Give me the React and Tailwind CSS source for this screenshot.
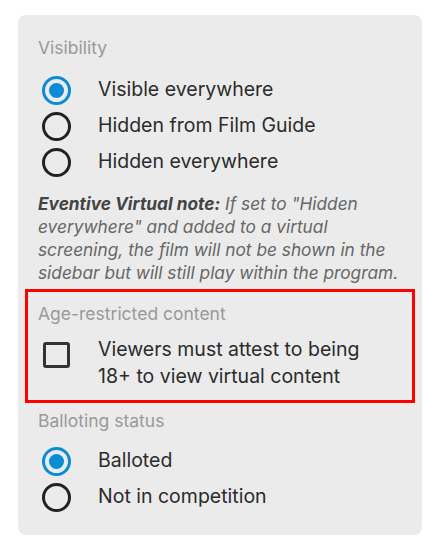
import React, { useState } from "react";

function Radio({ checked, label, onClick }) {
    return (
        <div className="flex items-center h-9 cursor-pointer" onClick={onClick}>
            <div className="w-9 flex justify-center">
                {checked ? (
                    <span className="w-[29px] h-[29px] rounded-full border-[3px] border-[#0a8bd6] flex items-center justify-center">
                        <span className="w-[15px] h-[15px] rounded-full bg-[#0a8bd6]"></span>
                    </span>
                ) : (
                    <span className="w-[29px] h-[29px] rounded-full border-[3px] border-[#222]"></span>
                )}
            </div>
            <span className="ml-[24px] text-[19.5px] text-[#2b2b2b]">{label}</span>
        </div>
    );
}

export default function App() {
    const [visibility, setVisibility] = useState("visible");
    const [ballot, setBallot] = useState("balloted");
    const [adult, setAdult] = useState(false);

    return (
        <div className="w-[440px] h-[554px] bg-white pt-[15px] px-[18px]" style={{ fontFamily: "Inter, 'Noto Sans', sans-serif" }}>
            <div className="w-[404px] h-[520px] rounded-lg bg-[#ebebeb] pt-[24px] pb-4">
                <div className="px-5">
                    <div className="text-[17.5px] text-[#999] leading-[18px]">Visibility</div>
                    <div className="mt-[15px]">
                        <Radio checked={visibility === "visible"} label="Visible everywhere" onClick={() => setVisibility("visible")} />
                        <Radio checked={visibility === "guide"} label="Hidden from Film Guide" onClick={() => setVisibility("guide")} />
                        <Radio checked={visibility === "hidden"} label="Hidden everywhere" onClick={() => setVisibility("hidden")} />
                    </div>
                    <p className="mt-[12px] text-[17.3px] leading-[23px] italic text-[#666]">
                        <span className="font-bold text-[#444]">Eventive Virtual note:</span> If set to "Hidden everywhere" and added to a virtual screening, the film will not be shown in the sidebar but will still play within the program.
                    </p>
                </div>
                <div className="mx-[7px] mt-[5px] border-[3px] border-[#ff0000] h-[114px] px-[10px] pt-[13px]">
                    <div className="text-[17.5px] text-[#999] leading-[18px]">Age-restricted content</div>
                    <div className="flex mt-[13px] cursor-pointer" onClick={() => setAdult(!adult)}>
                        <div className="w-9 flex justify-center pt-[6px]">
                            <span className="w-[27px] h-[26px] rounded-[3px] border-[3px] border-[#333]"></span>
                        </div>
                        <span className="ml-[24px] text-[19.5px] leading-[27px] text-[#2b2b2b]">
                            Viewers must attest to being<br />18+ to view virtual content
                        </span>
                    </div>
                </div>
                <div className="px-5 mt-[9px]">
                    <div className="text-[17.5px] text-[#999] leading-[18px]">Balloting status</div>
                    <div className="mt-[13px]">
                        <Radio checked={ballot === "balloted"} label="Balloted" onClick={() => setBallot("balloted")} />
                        <Radio checked={ballot === "none"} label="Not in competition" onClick={() => setBallot("none")} />
                    </div>
                </div>
            </div>
        </div>
    );
}
